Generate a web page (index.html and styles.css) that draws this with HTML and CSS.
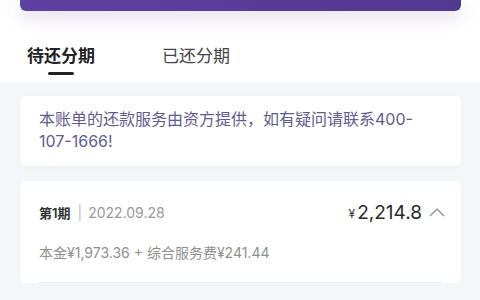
FILE: index.html
```html
<!DOCTYPE html>
<html lang="zh-CN">
<head>
<meta charset="utf-8">
<link rel="stylesheet" href="styles.css">
</head>
<body>
<div class="header">
  <div class="banner"></div>
  <div class="tabs">
    <div class="tab active">
      <span class="tab-label">待还分期</span>
      <span class="tab-line"></span>
    </div>
    <div class="tab">
      <span class="tab-label">已还分期</span>
    </div>
  </div>
</div>
<div class="content">
  <div class="card notice">本账单的还款服务由资方提供，如有疑问请联系400-107-1666!</div>
  <div class="card bill">
    <div class="bill-row">
      <div class="bill-title"><span class="period">第1期</span><span class="sep">|</span><span class="date">2022.09.28</span></div>
      <div class="bill-amount"><span class="yen">¥</span><span class="num">2,214.8</span>
        <svg class="chev" width="16" height="10" viewBox="0 0 16 10"><path d="M1.5 8.5 L8 2 L14.5 8.5" fill="none" stroke="#9a9a9a" stroke-width="1.5" stroke-linecap="round" stroke-linejoin="round"/></svg>
      </div>
    </div>
    <div class="bill-detail">本金¥1,973.36 + 综合服务费¥241.44</div>
    <div class="divider"></div>
  </div>
</div>
</body>
</html>
```
FILE: styles.css
```css
html, body {
  margin: 0;
  padding: 0;
  background: #f5f6fa;
  font-family: "Inter", "Noto Sans CJK SC", sans-serif;
}
.header {
  background: #ffffff;
  padding-bottom: 7px;
}
.banner {
  margin: 0 19px 0 20px;
  height: 11px;
  border-radius: 0 0 6px 6px;
  background: linear-gradient(90deg, #5d41a0, #513891);
  box-shadow: 0 6px 18px rgba(95, 65, 160, 0.22);
}
.tabs {
  display: flex;
  gap: 67px;
  padding: 32px 0 0 27px;
}
.tab {
  display: flex;
  flex-direction: column;
  align-items: center;
}
.tab-label {
  font-size: 17px;
  line-height: 24px;
  color: #444;
  font-family: "Noto Sans CJK SC", sans-serif;
}
.tab.active .tab-label {
  font-weight: 700;
  color: #222;
}
.tab-line {
  margin-top: 5px;
  width: 26px;
  height: 3px;
  border-radius: 2px;
  background: #222;
}
.content {
  padding: 14px 19px 0 20px;
  display: flex;
  flex-direction: column;
  gap: 15px;
}
.card {
  background: #ffffff;
  border-radius: 5px;
  box-shadow: 0 1px 6px rgba(0, 0, 0, 0.03);
}
.notice {
  padding: 12px 19px 14px;
  font-size: 16px;
  line-height: 22px;
  color: #5f5b8e;
}
.bill {
  padding: 19px 19px 0;
}
.bill-row {
  display: flex;
  justify-content: space-between;
  align-items: center;
  height: 24px;
}
.bill-title {
  display: flex;
  align-items: center;
}
.period {
  font-size: 13px;
  font-weight: 600;
  color: #333;
}
.sep {
  margin: 0 6px 0 7px;
  font-size: 14px;
  color: #bbb;
}
.date {
  font-size: 14px;
  color: #999;
}
.bill-amount {
  display: flex;
  align-items: center;
  margin-right: -3px;
}
.yen {
  font-size: 12px;
  color: #333;
  margin-right: 2px;
  padding-top: 3px;
}
.num {
  font-size: 19px;
  color: #2a2a2a;
}
.chev {
  margin-left: 7px;
}
.bill-detail {
  margin-top: 18px;
  font-size: 14px;
  line-height: 22px;
  color: #8f8f8f;
}
.divider {
  margin-top: 18px;
  height: 1px;
  background: #eeeeee;
}
```
